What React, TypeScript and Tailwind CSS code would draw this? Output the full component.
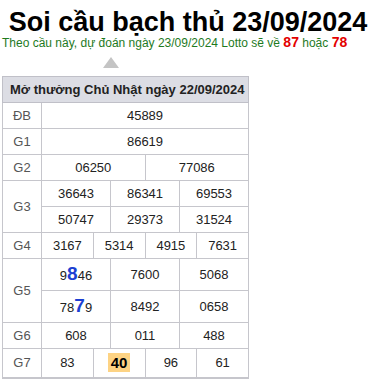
const cell = 'border border-[#c6c6cc] text-center text-[13px] text-[#222] p-0';
const label = 'border border-[#c6c6cc] text-center text-[13px] text-[#555] p-0';

function Hl({ d }: { d: string }) {
  return <span className="text-[19px] font-bold text-[#1c3fd2] leading-none">{d}</span>;
}

export default function App() {
  return (
    <div className="w-[376px] h-[392px] bg-white overflow-hidden font-['Liberation_Sans',Arial,sans-serif]">
      <h1 className="mt-[10px] text-center text-[27px] leading-[25px] font-bold text-black">
        Soi cầu bạch thủ 23/09/2024
      </h1>
      <p className="ml-[2px] mt-[1px] text-[12px] leading-[14px] text-[#1e7a1e] whitespace-nowrap">
        Theo cầu này, dự đoán ngày 23/09/2024 Lotto sẽ về{' '}
        <b className="text-[14px] leading-[12px] text-[#e30000]">87</b> hoặc{' '}
        <b className="text-[14px] leading-[12px] text-[#e30000]">78</b>
      </p>
      <div className="ml-[103px] mt-[7px] w-0 h-0 border-l-[8px] border-r-[8px] border-b-[11px] border-l-transparent border-r-transparent border-b-[#c4c4c4]" />
      <table className="ml-[2px] mt-[8px] w-[247px] table-fixed border-collapse">
        <colgroup>
          <col className="w-[39px]" />
          {Array.from({ length: 12 }).map((_, i) => (
            <col key={i} />
          ))}
        </colgroup>
        <tbody>
          <tr className="h-[26px]">
            <th colSpan={13} className="border border-[#c0c0c8] bg-[#dcdde4] text-left pl-[7px] text-[13px] font-bold text-[#222]">
              Mở thưởng Chủ Nhật ngày 22/09/2024
            </th>
          </tr>
          <tr className="h-[26px]">
            <td className={label}>ĐB</td>
            <td colSpan={12} className={cell}>45889</td>
          </tr>
          <tr className="h-[26px]">
            <td className={label}>G1</td>
            <td colSpan={12} className={cell}>86619</td>
          </tr>
          <tr className="h-[26px]">
            <td className={label}>G2</td>
            <td colSpan={6} className={cell}>06250</td>
            <td colSpan={6} className={cell}>77086</td>
          </tr>
          <tr className="h-[26px]">
            <td rowSpan={2} className={label}>G3</td>
            <td colSpan={4} className={cell}>36643</td>
            <td colSpan={4} className={cell}>86341</td>
            <td colSpan={4} className={cell}>69553</td>
          </tr>
          <tr className="h-[26px]">
            <td colSpan={4} className={cell}>50747</td>
            <td colSpan={4} className={cell}>29373</td>
            <td colSpan={4} className={cell}>31524</td>
          </tr>
          <tr className="h-[26px]">
            <td className={label}>G4</td>
            <td colSpan={3} className={cell}>3167</td>
            <td colSpan={3} className={cell}>5314</td>
            <td colSpan={3} className={cell}>4915</td>
            <td colSpan={3} className={cell}>7631</td>
          </tr>
          <tr className="h-[32px]">
            <td rowSpan={2} className={label}>G5</td>
            <td colSpan={4} className={cell}>
              9<Hl d="8" />46
            </td>
            <td colSpan={4} className={cell}>7600</td>
            <td colSpan={4} className={cell}>5068</td>
          </tr>
          <tr className="h-[32px]">
            <td colSpan={4} className={cell}>
              78<Hl d="7" />9
            </td>
            <td colSpan={4} className={cell}>8492</td>
            <td colSpan={4} className={cell}>0658</td>
          </tr>
          <tr className="h-[26px]">
            <td className={label}>G6</td>
            <td colSpan={4} className={cell}>608</td>
            <td colSpan={4} className={cell}>011</td>
            <td colSpan={4} className={cell}>488</td>
          </tr>
          <tr className="h-[29px]">
            <td className={`${label} border-b-2`}>G7</td>
            <td colSpan={3} className={`${cell} border-b-2`}>83</td>
            <td colSpan={3} className={`${cell} border-b-2`}>
              <span className="inline-block bg-[#fdd384] font-bold text-[15px] leading-[19px] px-[3px] text-black">40</span>
            </td>
            <td colSpan={3} className={`${cell} border-b-2`}>96</td>
            <td colSpan={3} className={`${cell} border-b-2`}>61</td>
          </tr>
        </tbody>
      </table>
    </div>
  );
}
